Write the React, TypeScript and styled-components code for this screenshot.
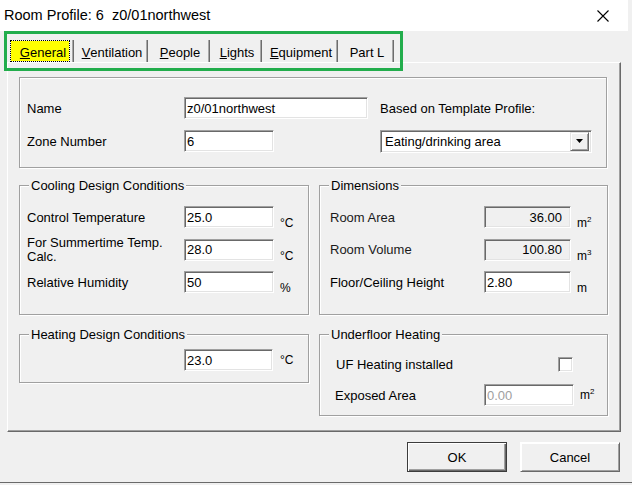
import styled, { createGlobalStyle } from "styled-components"

const GlobalStyle = createGlobalStyle`
  html, body {
    margin: 0;
    padding: 0;
    background: #f0f0f0;
  }
  body {
    font-family: "Liberation Sans", Arial, sans-serif;
    font-size: 13px;
    color: #000;
  }
`

const tabs = [
  { key: "G", rest: "eneral", w: 66, active: true },
  { key: "V", rest: "entilation", w: 74 },
  { key: "P", rest: "eople", w: 62 },
  { key: "L", rest: "ights", w: 52 },
  { key: "E", rest: "quipment", w: 76 },
  { key: "", rest: "Part L", w: 56 },
]

const Close = () => (
  <svg width="14" height="14" viewBox="0 0 14 14">
    <path d="M1.5 1.5 L12.5 12.5 M12.5 1.5 L1.5 12.5" stroke="#000" strokeWidth="1.1" fill="none" />
  </svg>
)

const DropArrow = () => (
  <svg width="8" height="5" viewBox="0 0 8 5">
    <path d="M0 0 H7 L3.5 4 Z" fill="#000" />
  </svg>
)

export default function App() {
  return (
    <>
      <GlobalStyle />
      <Window>
        <TitleBar>
          <Title>Room Profile: 6  z0/01northwest</Title>
          <CloseBox><Close /></CloseBox>
        </TitleBar>

        <TabStrip>
          {tabs.map((t) => (
            <Tab key={t.rest} $w={t.w}>
              <TabFace $active={!!t.active}>
                {t.key && <u>{t.key}</u>}
                {t.rest}
              </TabFace>
            </Tab>
          ))}
        </TabStrip>

        <Panel>
          <TopGroup>
            <FieldGrid $cols="157px 196px 212px" $pad="19px 0 0 7px" $gap={11}>
              <Label>Name</Label>
              <Input $w={184} defaultValue="z0/01northwest" />
              <Label>Based on Template Profile:</Label>
              <Label>Zone Number</Label>
              <Input $w={90} defaultValue="6" />
              <Select>
                <span>Eating/drinking area</span>
                <DropButton><DropArrow /></DropButton>
              </Select>
            </FieldGrid>
          </TopGroup>

          <Columns>
            <Group $h={137}>
              <Legend>Cooling Design Conditions</Legend>
              <FieldGrid $cols="157px 90px auto" $pad="13px 0 0 7px" $gap={10.5}>
                <Label>Control Temperature</Label>
                <Input $w={90} defaultValue="25.0" />
                <Unit $low>°C</Unit>
                <Label $tight>For Summertime Temp.<br />Calc.</Label>
                <Input $w={90} defaultValue="28.0" />
                <Unit $low>°C</Unit>
                <Label>Relative Humidity</Label>
                <Input $w={90} defaultValue="50" />
                <Unit $low>%</Unit>
              </FieldGrid>
            </Group>

            <Group $h={137}>
              <Legend>Dimensions</Legend>
              <FieldGrid $cols="154px 87px auto" $pad="13px 0 0 10px" $gap={10.5}>
                <Label $muted>Room Area</Label>
                <Input $w={87} $ro readOnly defaultValue="36.00" />
                <Unit $low>m<sup>2</sup></Unit>
                <Label $muted>Room Volume</Label>
                <Input $w={87} $ro readOnly defaultValue="100.80" />
                <Unit $low>m<sup>3</sup></Unit>
                <Label>Floor/Ceiling Height</Label>
                <Input $w={87} defaultValue="2.80" />
                <Unit $low>m</Unit>
              </FieldGrid>
            </Group>

            <Group $h={56}>
              <Legend>Heating Design Conditions</Legend>
              <FieldGrid $cols="157px 90px auto" $pad="7px 0 0 7px">
                <span />
                <Input $w={89} defaultValue="23.0" />
                <Unit>°C</Unit>
              </FieldGrid>
            </Group>

            <Group $h={89}>
              <Legend>Underfloor Heating</Legend>
              <FieldGrid $cols="149px 90px auto" $pad="11px 0 0 15px" $gap={9}>
                <Label $indent>UF Heating installed</Label>
                <Check />
                <span />
                <Label>Exposed Area</Label>
                <Input $w={90} disabled defaultValue="0.00" />
                <Unit>m<sup>2</sup></Unit>
              </FieldGrid>
            </Group>
          </Columns>
        </Panel>

        <Footer>
          <Button $default>OK</Button>
          <Button>Cancel</Button>
        </Footer>
        <BottomEdge />

        <Highlight />
      </Window>
    </>
  )
}

const Window = styled.div`
  position: relative;
  width: 632px;
  height: 485px;
  overflow: hidden;
  background: #f0f0f0;
`

const TitleBar = styled.div`
  display: flex;
  align-items: center;
  justify-content: space-between;
  width: 628px;
  height: 31px;
  padding-left: 4px;
  box-sizing: border-box;
  background: #fff;
`

const Title = styled.div`
  font-size: 14.5px;
  white-space: pre;
  padding-bottom: 1px;
`

const CloseBox = styled.div`
  display: flex;
  width: 46px;
  justify-content: center;
  padding-right: 2px;
`

const TabStrip = styled.div`
  display: flex;
  height: 22px;
  margin: 9px 0 0 8px;
`

const Tab = styled.div<{ $w: number }>`
  display: flex;
  width: ${(p) => p.$w}px;
  box-sizing: border-box;
  border-right: 1px solid #6d6d6d;
  box-shadow: inset -1px 0 0 #a8a8a8;
  padding: 1px 2px 1px 3px;
`

const TabFace = styled.div<{ $active: boolean }>`
  flex: 1;
  display: flex;
  align-items: center;
  justify-content: center;
  padding-left: ${(p) => (p.$active ? 6 : 4)}px;
  padding-top: 2px;
  white-space: pre;
  background: ${(p) => (p.$active ? "#ffff00" : "transparent")};
  outline: ${(p) => (p.$active ? "1px dotted #000" : "none")};
  margin-right: 2px;
`

const Panel = styled.div`
  width: 614px;
  height: 370px;
  margin-left: 7px;
  box-sizing: border-box;
  border-top: 1px solid #fff;
  border-left: 1px solid #fff;
  border-right: 1px solid #696969;
  border-bottom: 1px solid #696969;
  box-shadow: inset -1px -1px 0 #a0a0a0;
  padding: 14px 0 0 11px;
`

const etched = `
  border: 1px solid #a0a0a0;
  box-shadow: inset 1px 1px 0 #fff, 1px 1px 0 #fff;
`

const TopGroup = styled.div`
  width: 588px;
  height: 91px;
  box-sizing: border-box;
  ${etched}
`

const Columns = styled.div`
  display: grid;
  grid-template-columns: 290px 289px;
  column-gap: 10px;
  row-gap: 12px;
  align-items: start;
  margin-top: 10px;
`

const Group = styled.fieldset<{ $h: number }>`
  margin: 0;
  padding: 0;
  min-width: 0;
  height: ${(p) => p.$h}px;
  box-sizing: border-box;
  ${etched}
`

const Legend = styled.legend`
  margin-left: 9px;
  padding: 0 2px;
  line-height: 15px;
  background: #f0f0f0;
`

const FieldGrid = styled.div<{ $cols: string; $pad: string; $gap?: number }>`
  display: grid;
  grid-template-columns: ${(p) => p.$cols};
  grid-auto-rows: 22px;
  row-gap: ${(p) => p.$gap ?? 10}px;
  align-items: center;
  padding: ${(p) => p.$pad};
`

const Label = styled.div<{ $tight?: boolean; $muted?: boolean; $indent?: boolean }>`
  line-height: ${(p) => (p.$tight ? 14 : 15)}px;
  white-space: nowrap;
  color: ${(p) => (p.$muted ? "#1a1a1a" : "#000")};
  padding-left: ${(p) => (p.$indent ? 1 : 0)}px;
`

const Input = styled.input<{ $w: number; $ro?: boolean }>`
  width: ${(p) => p.$w}px;
  height: 22px;
  box-sizing: border-box;
  margin: 0;
  padding: 0 ${(p) => (p.$ro ? 8 : 2)}px 0 2px;
  font: inherit;
  color: #000;
  text-align: ${(p) => (p.$ro ? "right" : "left")};
  background: ${(p) => (p.$ro ? "#f0f0f0" : "#fff")};
  border-top: 1px solid #a0a0a0;
  border-left: 1px solid #a0a0a0;
  border-bottom: 1px solid #fff;
  border-right: 1px solid #fff;
  box-shadow: inset 1px 1px 0 #696969, inset -1px -1px 0 #e3e3e3;
  outline: none;
  &:disabled {
    color: #a0a0a0;
    background: #fff;
  }
`

const Select = styled.div`
  display: flex;
  align-items: center;
  justify-content: space-between;
  width: 212px;
  height: 23px;
  box-sizing: border-box;
  padding: 0 2px 0 4px;
  background: #fff;
  border-top: 1px solid #a0a0a0;
  border-left: 1px solid #a0a0a0;
  border-bottom: 1px solid #fff;
  border-right: 1px solid #fff;
  box-shadow: inset 1px 1px 0 #696969, inset -1px -1px 0 #e3e3e3;
`

const DropButton = styled.div`
  display: flex;
  align-items: center;
  justify-content: center;
  width: 19px;
  height: 19px;
  box-sizing: border-box;
  background: #f0f0f0;
  border-top: 1px solid #e3e3e3;
  border-left: 1px solid #e3e3e3;
  border-right: 1px solid #696969;
  border-bottom: 1px solid #696969;
  box-shadow: inset 1px 1px 0 #fff, inset -1px -1px 0 #a0a0a0;
`

const Unit = styled.div<{ $low?: boolean }>`
  font-size: 12px;
  line-height: 14px;
  padding-left: 6px;
  white-space: nowrap;
  align-self: ${(p) => (p.$low ? "end" : "center")};
  margin-bottom: ${(p) => (p.$low ? -2 : 0)}px;

  sup {
    font-size: 8px;
    line-height: 0;
    vertical-align: 5px;
  }
`

const Check = styled.div`
  justify-self: end;
  width: 15px;
  height: 15px;
  margin-right: 1px;
  box-sizing: border-box;
  background: #fff;
  border-top: 1px solid #a0a0a0;
  border-left: 1px solid #a0a0a0;
  border-bottom: 1px solid #fff;
  border-right: 1px solid #fff;
  box-shadow: inset 1px 1px 0 #696969, inset -1px -1px 0 #e3e3e3;
`

const Footer = styled.div`
  display: flex;
  justify-content: flex-end;
  gap: 13px;
  margin-top: 10px;
  padding-right: 12px;
`

const Button = styled.button<{ $default?: boolean }>`
  width: 100px;
  height: 30px;
  margin: 0;
  padding: 0;
  font: inherit;
  font-size: 13px;
  color: #000;
  background: #f0f0f0;
  border: 1px solid ${(p) => (p.$default ? "#3c3c3c" : "#f0f0f0")};
  box-shadow: ${(p) =>
    p.$default
      ? "inset 1px 1px 0 #fff, inset -1px -1px 0 #696969, inset -2px -2px 0 #a0a0a0"
      : "inset 1px 1px 0 #fff, inset -1px -1px 0 #a0a0a0"};
  border-top-color: ${(p) => (p.$default ? "#3c3c3c" : "#fff")};
  border-left-color: ${(p) => (p.$default ? "#3c3c3c" : "#fff")};
  border-right-color: ${(p) => (p.$default ? "#3c3c3c" : "#696969")};
  border-bottom-color: ${(p) => (p.$default ? "#3c3c3c" : "#696969")};
`

const BottomEdge = styled.div`
  height: 1px;
  margin-top: 10px;
  background: #6a6a6a;
`

const Highlight = styled.div`
  position: absolute;
  left: 4px;
  top: 31px;
  width: 399px;
  height: 40px;
  box-sizing: border-box;
  border: 3px solid #22ad4c;
  pointer-events: none;
`
